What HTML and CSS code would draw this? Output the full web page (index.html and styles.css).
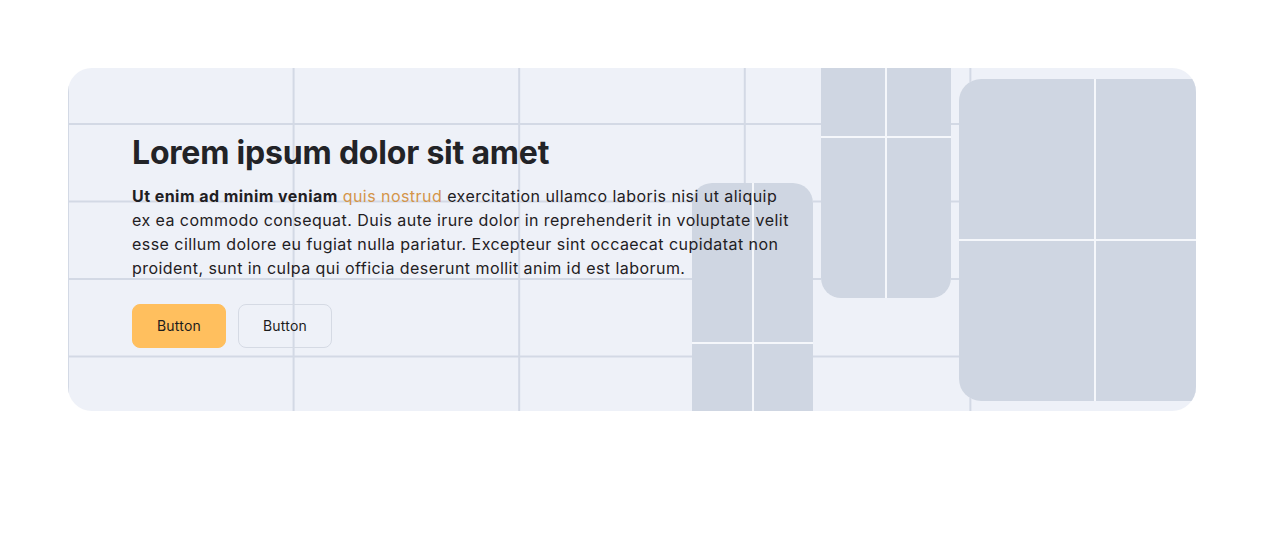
FILE: index.html
```html
<!DOCTYPE html>
<html lang="en">
<head>
<meta charset="utf-8">
<title>Hero</title>
<link rel="stylesheet" href="styles.css">
</head>
<body>
<section class="hero">
  <div class="shape shape-a"><i></i><i></i><i></i><i></i></div>
  <div class="shape shape-b"><i></i><i></i><i></i><i></i></div>
  <div class="shape shape-c"><i></i><i></i><i></i><i></i></div>
  <div class="content">
    <h1 class="title">Lorem ipsum dolor sit amet</h1>
    <p class="lead"><strong>Ut enim ad minim veniam</strong> <a class="accent" href="#">quis nostrud</a> exercitation ullamco laboris nisi ut aliquip ex ea commodo consequat. Duis aute irure dolor in reprehenderit in voluptate velit esse cillum dolore eu fugiat nulla pariatur. Excepteur sint occaecat cupidatat non proident, sunt in culpa qui officia deserunt mollit anim id est laborum.</p>
    <div class="actions">
      <button class="btn btn-primary">Button</button>
      <button class="btn btn-outline">Button</button>
    </div>
  </div>
</section>
</body>
</html>
```

FILE: styles.css
```css
* { box-sizing: border-box; }
html, body { margin: 0; background: #ffffff; }
body {
  padding: 68px;
  font-family: Inter, "Noto Sans", sans-serif;
  color: #1f2023;
}
.hero {
  position: relative;
  height: 343px;
  border-radius: 24px;
  overflow: hidden;
  background-color: #eef1f8;
  background-image:
    linear-gradient(90deg, #d3d9e5 2px, transparent 2px),
    linear-gradient(180deg, #d3d9e5 2px, transparent 2px);
  background-size: 20% 100%, 100% 77.5px;
  background-position: -1px 0, 0 55px;
  padding: 64px;
}
.shape {
  position: absolute;
  display: grid;
  grid-template-columns: 1fr 1fr;
  grid-template-rows: 1fr 1fr;
  gap: 2px;
  background: #f5f7fb;
  border-radius: 20px;
  overflow: hidden;
}
.shape i { background: #cfd6e2; display: block; }
.shape-a { left: 624px; top: 115px; width: 121px; height: 320px; }
.shape-b { left: 753px; top: -92px; width: 130px; height: 322px; }
.shape-c { left: 891px; top: 11px; width: 272px; height: 322px; border-radius: 22px; }
.content { position: relative; z-index: 1; }
.title {
  margin: 0 0 12px;
  padding-top: 1px;
  font-size: 32px;
  line-height: 40px;
  font-weight: 700;
  letter-spacing: -0.2px;
  color: #222327;
}
.lead {
  margin: -1px 0 0;
  max-width: 662px;
  font-size: 16px;
  line-height: 24px;
  letter-spacing: 0.45px;
  color: #1f2023;
}
.lead strong { font-weight: 700; }
.accent { color: #d4954a; text-decoration: none; }
.actions { display: flex; gap: 12px; margin-top: 24px; }
.btn {
  font-family: Inter, "Noto Sans", sans-serif;
  font-size: 14px;
  line-height: 20px;
  letter-spacing: 0.2px;
  padding: 11px 24px;
  border-radius: 8px;
  border: 1px solid transparent;
  color: #1c1c1c;
  cursor: pointer;
}
.btn-primary { background: #ffbf5e; border-color: #ffbf5e; }
.btn-outline { background: transparent; border-color: #d5dae4; }
```
